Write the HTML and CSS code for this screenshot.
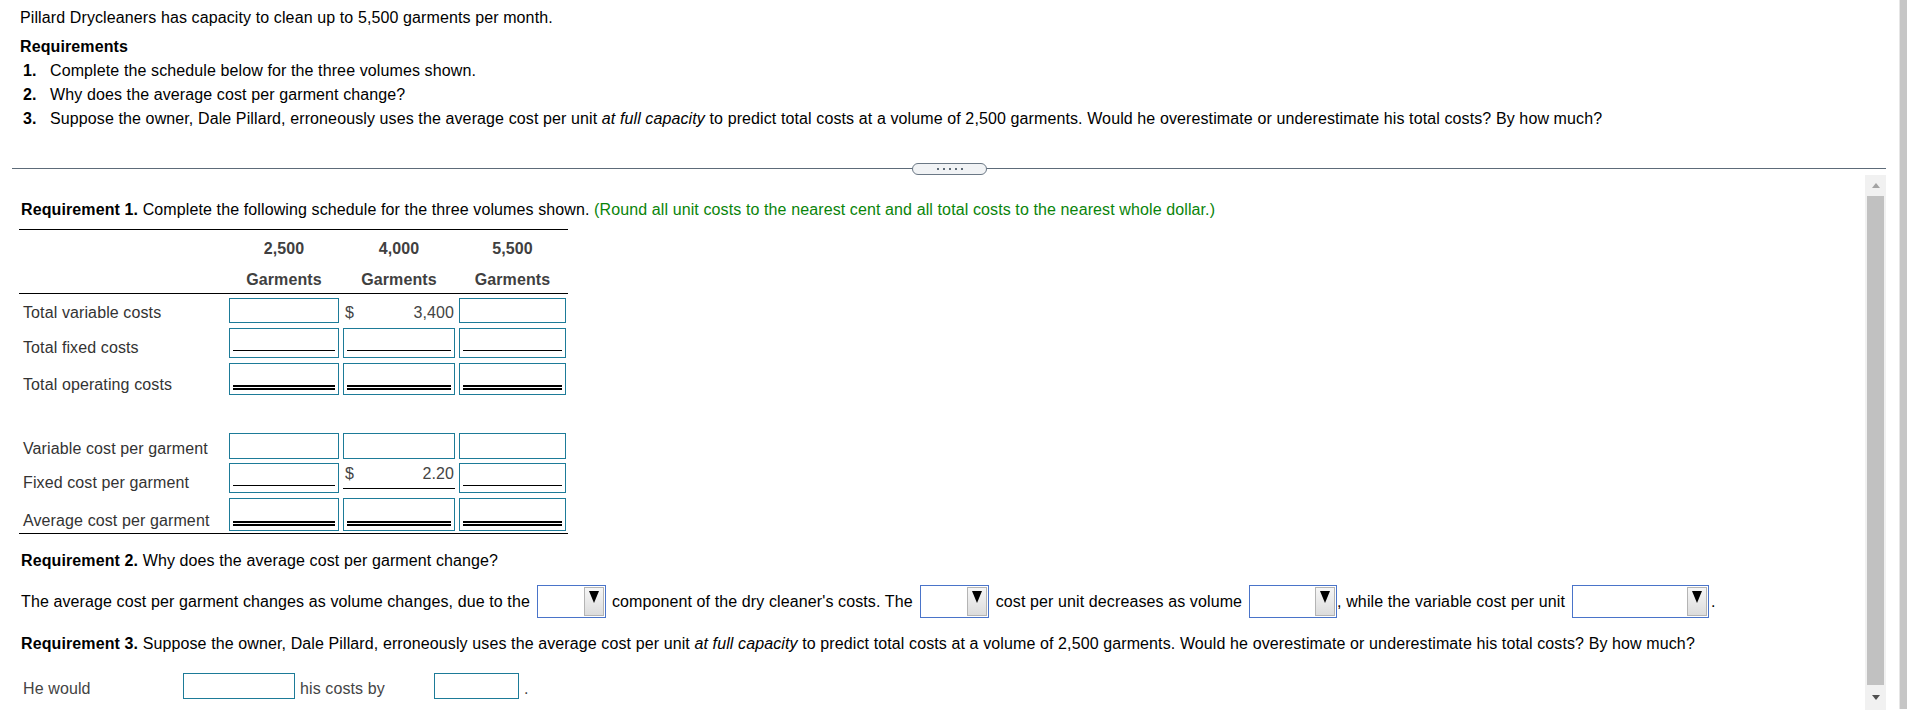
FILE: index.html
```html
<!DOCTYPE html>
<html>
<head>
<meta charset="utf-8">
<title>Pillard Drycleaners</title>
<link rel="stylesheet" href="styles.css">
</head>
<body>
<div class="page">
  <div class="main">
    <div class="top">
      <p class="intro">Pillard Drycleaners has capacity to clean up to 5,500 garments per month.</p>
      <p class="req-title">Requirements</p>
      <div class="items">
        <div class="item"><span class="num">1.</span><span>Complete the schedule below for the three volumes shown.</span></div>
        <div class="item"><span class="num">2.</span><span>Why does the average cost per garment change?</span></div>
        <div class="item"><span class="num">3.</span><span>Suppose the owner, Dale Pillard, erroneously uses the average cost per unit <i>at full capacity</i> to predict total costs at a volume of 2,500 garments. Would he overestimate or underestimate his total costs? By how much?</span></div>
      </div>
    </div>

    <div class="divider">
      <div class="pill"><span></span><span></span><span></span><span></span><span></span></div>
    </div>

    <div class="pane">
      <div class="content">
        <p class="req1"><b>Requirement 1.</b> Complete the following schedule for the three volumes shown. <span class="green">(Round all unit costs to the nearest cent and all total costs to the nearest whole dollar.)</span></p>

        <div class="sched">
          <div class="hrow h1">
            <div class="lab"></div>
            <div class="hc">2,500</div>
            <div class="hc">4,000</div>
            <div class="hc">5,500</div>
          </div>
          <div class="hrow h2">
            <div class="lab"></div>
            <div class="hc">Garments</div>
            <div class="hc">Garments</div>
            <div class="hc">Garments</div>
          </div>

          <div class="row r1">
            <div class="lab">Total variable costs</div>
            <div class="cell"><div class="box b1"></div></div>
            <div class="cell"><div class="given"><span>$</span><span>3,400</span></div></div>
            <div class="cell"><div class="box b3"></div></div>
          </div>
          <div class="row r2">
            <div class="lab">Total fixed costs</div>
            <div class="cell"><div class="box b1 single"><div class="ln"></div></div></div>
            <div class="cell"><div class="box b2 single"><div class="ln"></div></div></div>
            <div class="cell"><div class="box b3 single"><div class="ln"></div></div></div>
          </div>
          <div class="row r3">
            <div class="lab">Total operating costs</div>
            <div class="cell"><div class="box b1 dbl"><div class="ln"></div></div></div>
            <div class="cell"><div class="box b2 dbl"><div class="ln"></div></div></div>
            <div class="cell"><div class="box b3 dbl"><div class="ln"></div></div></div>
          </div>
          <div class="row r4">
            <div class="lab">Variable cost per garment</div>
            <div class="cell"><div class="box b1"></div></div>
            <div class="cell"><div class="box b2"></div></div>
            <div class="cell"><div class="box b3"></div></div>
          </div>
          <div class="row r5">
            <div class="lab">Fixed cost per garment</div>
            <div class="cell"><div class="box b1 single"><div class="ln"></div></div></div>
            <div class="cell"><div class="given under"><span>$</span><span>2.20</span></div></div>
            <div class="cell"><div class="box b3 single"><div class="ln"></div></div></div>
          </div>
          <div class="row r6">
            <div class="lab">Average cost per garment</div>
            <div class="cell"><div class="box b1 dbl"><div class="ln"></div></div></div>
            <div class="cell"><div class="box b2 dbl"><div class="ln"></div></div></div>
            <div class="cell"><div class="box b3 dbl"><div class="ln"></div></div></div>
          </div>
        </div>

        <p class="req2"><b>Requirement 2.</b> Why does the average cost per garment change?</p>

        <div class="sentence">
          <span>The average cost per garment changes as volume changes, due to the</span>
          <span class="dd dd1"><span class="dd-btn"><svg width="10" height="12" viewBox="0 0 10 12"><polygon points="0,0 10,0 5,12" fill="#000"/></svg></span></span>
          <span>component of the dry cleaner's costs. The</span>
          <span class="dd dd2"><span class="dd-btn"><svg width="10" height="12" viewBox="0 0 10 12"><polygon points="0,0 10,0 5,12" fill="#000"/></svg></span></span>
          <span>cost per unit decreases as volume</span>
          <span class="dd dd3"><span class="dd-btn"><svg width="10" height="12" viewBox="0 0 10 12"><polygon points="0,0 10,0 5,12" fill="#000"/></svg></span></span>
          <span>, while the variable cost per unit</span>
          <span class="dd dd4"><span class="dd-btn"><svg width="10" height="12" viewBox="0 0 10 12"><polygon points="0,0 10,0 5,12" fill="#000"/></svg></span></span>
          <span>.</span>
        </div>

        <p class="req3"><b>Requirement 3.</b> Suppose the owner, Dale Pillard, erroneously uses the average cost per unit <i>at full capacity</i> to predict total costs at a volume of 2,500 garments. Would he overestimate or underestimate his total costs? By how much?</p>

        <div class="answer">
          <div class="alab">He would</div>
          <div class="box abox1"></div>
          <div class="amid">his costs by</div>
          <div class="box abox2"></div>
          <div class="adot">.</div>
        </div>
      </div>

      <div class="vscroll">
        <div class="vs-up"><svg width="8" height="5" viewBox="0 0 8 5"><polygon points="0,5 8,5 4,0" fill="#a3a3a3"/></svg></div>
        <div class="vs-thumb"></div>
        <div class="vs-down"><svg width="8" height="5" viewBox="0 0 8 5"><polygon points="0,0 8,0 4,5" fill="#505050"/></svg></div>
      </div>
    </div>
  </div>
  <div class="winbar"></div>
</div>
</body>
</html>
```

FILE: styles.css
```css
html, body {
  margin: 0;
  padding: 0;
  background: #fff;
}

body {
  font-family: "Liberation Sans", Arial, sans-serif;
  font-size: 16px;
  letter-spacing: 0.11px;
  color: #000;
  overflow: hidden;
}

p {
  margin: 0;
}

.page {
  display: flex;
  width: 1907px;
  height: 726px;
}

.main {
  flex: 1;
  min-width: 0;
}

.winbar {
  width: 7px;
  height: 709px;
  background: #c6c6c6;
  border-left: 1px solid #e6e6e6;
}

/* ---------- top ---------- */
.top {
  padding: 9px 0 0 20px;
}

.intro {
  line-height: 18px;
}

.req-title {
  margin-top: 11px;
  line-height: 18px;
  font-weight: bold;
}

.items {
  margin-top: 3px;
}

.item {
  display: flex;
  line-height: 24px;
  padding-left: 3px;
}

.num {
  width: 27px;
  flex: none;
  font-weight: bold;
}

/* ---------- divider ---------- */
.divider {
  position: relative;
  height: 12px;
  margin: 32px 13px 0 12px;
}

.divider::before {
  content: "";
  position: absolute;
  left: 0;
  right: 0;
  top: 5px;
  height: 1px;
  background: #5d6b79;
}

.pill {
  position: absolute;
  left: 900px;
  top: 0;
  width: 75px;
  height: 12px;
  box-sizing: border-box;
  border: 1px solid #6b7885;
  border-radius: 6px;
  background: #f1f3f5;
  display: flex;
  align-items: center;
  justify-content: center;
  gap: 4px;
}

.pill span {
  width: 2px;
  height: 2px;
  background: #5f6b77;
}

/* ---------- pane ---------- */
.pane {
  display: flex;
  height: 535px;
  margin: 0 13px 0 12px;
}

.content {
  flex: 1;
  min-width: 0;
  padding: 26px 0 0 9px;
  overflow: hidden;
}

.vscroll {
  width: 21px;
  flex: none;
  background: #f1f1f1;
  display: flex;
  flex-direction: column;
}

.vs-up {
  height: 21px;
  display: flex;
  align-items: center;
  justify-content: center;
}

.vs-thumb {
  height: 489px;
  margin: 0 2px;
  background: #c1c1c1;
}

.vs-down {
  flex: 1;
  display: flex;
  align-items: center;
  justify-content: center;
}

/* ---------- requirement 1 ---------- */
.req1 {
  line-height: 18px;
}

.green {
  color: #0a840a;
}

.sched {
  margin: 10px 0 0 -2px;
  width: 549px;
  border-top: 1px solid #000;
  border-bottom: 1px solid #000;
  padding-bottom: 2px;
}

.hrow,
.row {
  display: grid;
  grid-template-columns: 208px 114px 116px 111px;
}

.hc {
  text-align: center;
  font-weight: bold;
  color: #404040;
  line-height: 20px;
}

.h1 {
  padding-top: 9px;
}

.h2 {
  padding-top: 11px;
  padding-bottom: 3px;
  border-bottom: 1px solid #000;
}

.row {
  align-items: end;
}

.lab {
  padding: 0 0 1px 4px;
  line-height: 18px;
  color: #333;
  white-space: nowrap;
}

.cell {
  padding: 0 2px;
}

.box {
  box-sizing: border-box;
  border: 1px solid #1d7b98;
  background: #fff;
  display: flex;
  align-items: flex-end;
}

.b1 { width: 110px; }
.b2 { width: 112px; }
.b3 { width: 107px; }

.single {
  padding: 0 3px 6px 3px;
}

.single .ln {
  flex: 1;
  border-bottom: 1px solid #000;
}

.dbl {
  padding: 0 3px 4px 3px;
}

.dbl .ln {
  flex: 1;
  border-bottom: 5px double #000;
}

.r1 { padding-top: 4px; }
.r1 .box { height: 25px; }

.r2 { padding-top: 5px; }
.r2 .box { height: 30px; }

.r3 { padding-top: 5px; }
.r3 .box { height: 32px; }

.r4 { padding-top: 38px; }
.r4 .box { height: 26px; }

.r5 { padding-top: 4px; }
.r5 .box { height: 30px; }

.r6 { padding-top: 5px; }
.r6 .box { height: 33px; }

.given {
  display: flex;
  justify-content: space-between;
  line-height: 18px;
  color: #444;
  padding: 0 1px 1px 2px;
}

.given.under {
  border-bottom: 1px solid #000;
  padding-bottom: 5px;
  margin-bottom: 4px;
}

/* ---------- requirement 2 ---------- */
.req2 {
  margin-top: 18px;
  line-height: 18px;
}

.sentence {
  margin-top: 15px;
  display: flex;
  align-items: center;
  line-height: 18px;
  white-space: nowrap;
}

.dd {
  box-sizing: border-box;
  height: 33px;
  border: 1px solid #4a74c9;
  background: #fff;
  display: flex;
  justify-content: flex-end;
  margin: 0 6px 0 7px;
}

.dd1 { width: 69px; }
.dd2 { width: 69px; margin-right: 7px; }
.dd3 { width: 88px; margin-right: 0; }
.dd4 { width: 137px; margin-right: 2px; }

.dd-btn {
  box-sizing: border-box;
  width: 20px;
  margin: 1px;
  border: 1px solid #b4b4b4;
  background: linear-gradient(#f6f6f6, #dcdcdc);
  display: flex;
  justify-content: center;
  align-items: flex-start;
  padding-top: 3px;
}

/* ---------- requirement 3 ---------- */
.req3 {
  margin-top: 17px;
  line-height: 18px;
}

.answer {
  margin: 20px 0 0 -2px;
  display: flex;
  align-items: flex-end;
  color: #444;
}

.alab {
  width: 164px;
  box-sizing: border-box;
  padding: 0 0 1px 4px;
  line-height: 18px;
}

.abox1 {
  width: 112px;
  height: 26px;
}

.amid {
  box-sizing: border-box;
  width: 139px;
  padding: 0 0 1px 5px;
  line-height: 18px;
}

.abox2 {
  width: 85px;
  height: 26px;
}

.adot {
  padding: 0 0 1px 5px;
  line-height: 18px;
}
```
